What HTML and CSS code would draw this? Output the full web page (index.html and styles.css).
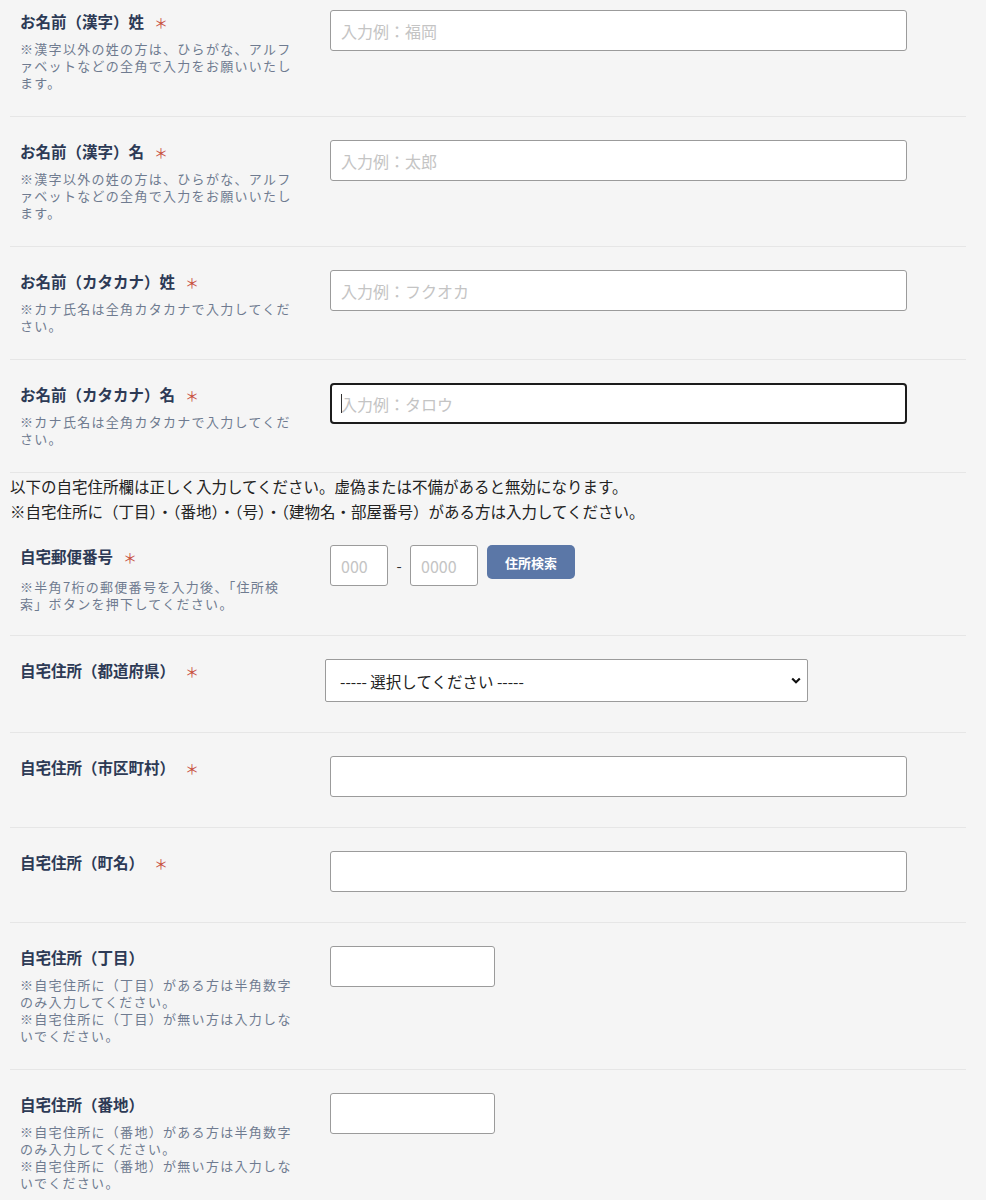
FILE: index.html
```html
<!DOCTYPE html>
<html lang="ja">
<head>
<meta charset="utf-8">
<title>フォーム</title>
<link rel="stylesheet" href="styles.css">
</head>
<body>
<div class="form">
  <div class="row first">
    <div class="label-col">
      <p class="label">お名前（漢字）姓<span class="req">＊</span></p>
      <p class="note">※漢字以外の姓の方は、ひらがな、アルファベットなどの全角で入力をお願いいたします。</p>
    </div>
    <div class="field-col"><input class="text" type="text" placeholder="入力例：福岡"></div>
  </div>
  <div class="row">
    <div class="label-col">
      <p class="label">お名前（漢字）名<span class="req">＊</span></p>
      <p class="note">※漢字以外の姓の方は、ひらがな、アルファベットなどの全角で入力をお願いいたします。</p>
    </div>
    <div class="field-col"><input class="text" type="text" placeholder="入力例：太郎"></div>
  </div>
  <div class="row">
    <div class="label-col">
      <p class="label">お名前（カタカナ）姓<span class="req">＊</span></p>
      <p class="note">※カナ氏名は全角カタカナで入力してください。</p>
    </div>
    <div class="field-col"><input class="text" type="text" placeholder="入力例：フクオカ"></div>
  </div>
  <div class="row">
    <div class="label-col">
      <p class="label">お名前（カタカナ）名<span class="req">＊</span></p>
      <p class="note">※カナ氏名は全角カタカナで入力してください。</p>
    </div>
    <div class="field-col">
      <div class="focus-wrap">
        <input class="text focused" type="text" placeholder="入力例：タロウ">
        <span class="caret"></span>
      </div>
    </div>
  </div>

  <div class="notice">
    <p>以下の自宅住所欄は正しく入力してください。虚偽または不備があると無効になります。</p>
    <p>※自宅住所に（丁目）・（番地）・（号）・（建物名・部屋番号）がある方は入力してください。</p>
  </div>

  <div class="row postal-row">
    <div class="label-col">
      <p class="label">自宅郵便番号<span class="req">＊</span></p>
      <p class="note postal-note">※半角7桁の郵便番号を入力後、「住所検索」ボタンを押下してください。</p>
    </div>
    <div class="field-col postal">
      <input class="text zip3" type="text" placeholder="000">
      <span class="dash">-</span>
      <input class="text zip4" type="text" placeholder="0000">
      <button class="search" type="button">住所検索</button>
    </div>
  </div>
  <div class="row">
    <div class="label-col">
      <p class="label">自宅住所（都道府県）<span class="req">＊</span></p>
    </div>
    <div class="field-col">
      <select class="pref">
        <option>----- 選択してください -----</option>
      </select>
    </div>
  </div>
  <div class="row">
    <div class="label-col">
      <p class="label">自宅住所（市区町村）<span class="req">＊</span></p>
    </div>
    <div class="field-col"><input class="text" type="text"></div>
  </div>
  <div class="row">
    <div class="label-col">
      <p class="label">自宅住所（町名）<span class="req">＊</span></p>
    </div>
    <div class="field-col"><input class="text" type="text"></div>
  </div>
  <div class="row">
    <div class="label-col">
      <p class="label">自宅住所（丁目）</p>
      <p class="note">※自宅住所に（丁目）がある方は半角数字のみ入力してください。<br>※自宅住所に（丁目）が無い方は入力しないでください。</p>
    </div>
    <div class="field-col"><input class="text small" type="text"></div>
  </div>
  <div class="row">
    <div class="label-col">
      <p class="label">自宅住所（番地）</p>
      <p class="note">※自宅住所に（番地）がある方は半角数字のみ入力してください。<br>※自宅住所に（番地）が無い方は入力しないでください。</p>
    </div>
    <div class="field-col"><input class="text small" type="text"></div>
  </div>
</div>
</body>
</html>
```

FILE: styles.css
```css
html, body {
  margin: 0;
  padding: 0;
  background: #f5f5f5;
}

body {
  font-family: "Noto Sans CJK JP", "Noto Sans", sans-serif;
  color: #222;
}

.form {
  width: 956px;
  margin-left: 10px;
}

.row {
  display: grid;
  grid-template-columns: 280px 1fr;
  column-gap: 30px;
  padding: 23px 0 25px 10px;
  border-bottom: 1px solid #e6e6e6;
}

.row.first {
  padding-top: 10px;
}

.label-col p {
  margin: 0;
}

.label {
  height: 22px;
  font-size: 15.5px;
  line-height: 22px;
  font-weight: 700;
  color: #2d3a55;
  white-space: nowrap;
}

.req {
  margin-left: 10px;
  color: #c8503e;
  font-weight: 400;
  font-size: 14px;
  line-height: 1;
}

.note {
  margin-top: 8px !important;
  font-size: 13px;
  line-height: 17px;
  letter-spacing: 0.1em;
  color: #6f7b90;
}

.note.postal-note {
  margin-top: 11px !important;
}

.field-col {
  display: flex;
  align-items: flex-start;
}

.text {
  box-sizing: border-box;
  width: 577px;
  height: 41px;
  margin: 0 0 5px 0;
  padding: 0 10px;
  border: 1px solid #9b9b9b;
  border-radius: 3px;
  background: #fff;
  font-family: "Noto Sans CJK JP", "Noto Sans", sans-serif;
  font-size: 16px;
  color: #222;
  outline: none;
}

.text::placeholder {
  color: #c4c4c4;
}

.text.small {
  width: 165px;
}

.focus-wrap {
  position: relative;
}

.text.focused {
  border: 2px solid #1c1c1c;
  border-radius: 4px;
  padding-left: 9px;
}

.caret {
  position: absolute;
  left: 11px;
  top: 11px;
  width: 1px;
  height: 19px;
  background: #333;
}

.notice {
  padding-top: 1px;
}

.notice p {
  margin: 0;
  font-size: 15.5px;
  line-height: 25px;
  color: #222;
}

.row.postal-row {
  padding-top: 21px;
  padding-bottom: 23px;
}

.text.zip3 {
  width: 58px;
}

.text.zip4 {
  width: 68px;
}

.dash {
  width: 22px;
  text-align: center;
  font-size: 15px;
  line-height: 41px;
  color: #333;
}

.search {
  margin-left: 9px;
  width: 88px;
  height: 34px;
  border: none;
  border-radius: 5px;
  background: #5b77a7;
  color: #fff;
  font-family: "Noto Sans CJK JP", "Noto Sans", sans-serif;
  font-size: 13px;
  font-weight: 700;
  padding: 0;
}

.pref {
  box-sizing: border-box;
  width: 483px;
  height: 43px;
  margin: 0 0 5px -5px;
  padding: 0 30px 0 14px;
  border: 1px solid #9b9b9b;
  border-radius: 2px;
  background-color: #fff;
  background-image: url("data:image/svg+xml;utf8,<svg xmlns='http://www.w3.org/2000/svg' width='10' height='7' viewBox='0 0 10 7'><path d='M1.2 1.5 L5 5.2 L8.8 1.5' fill='none' stroke='%23111' stroke-width='2.2'/></svg>");
  background-repeat: no-repeat;
  background-position: right 6px center;
  -webkit-appearance: none;
  appearance: none;
  font-family: "Noto Sans CJK JP", "Noto Sans", sans-serif;
  font-size: 15.5px;
  color: #222;
}
```
